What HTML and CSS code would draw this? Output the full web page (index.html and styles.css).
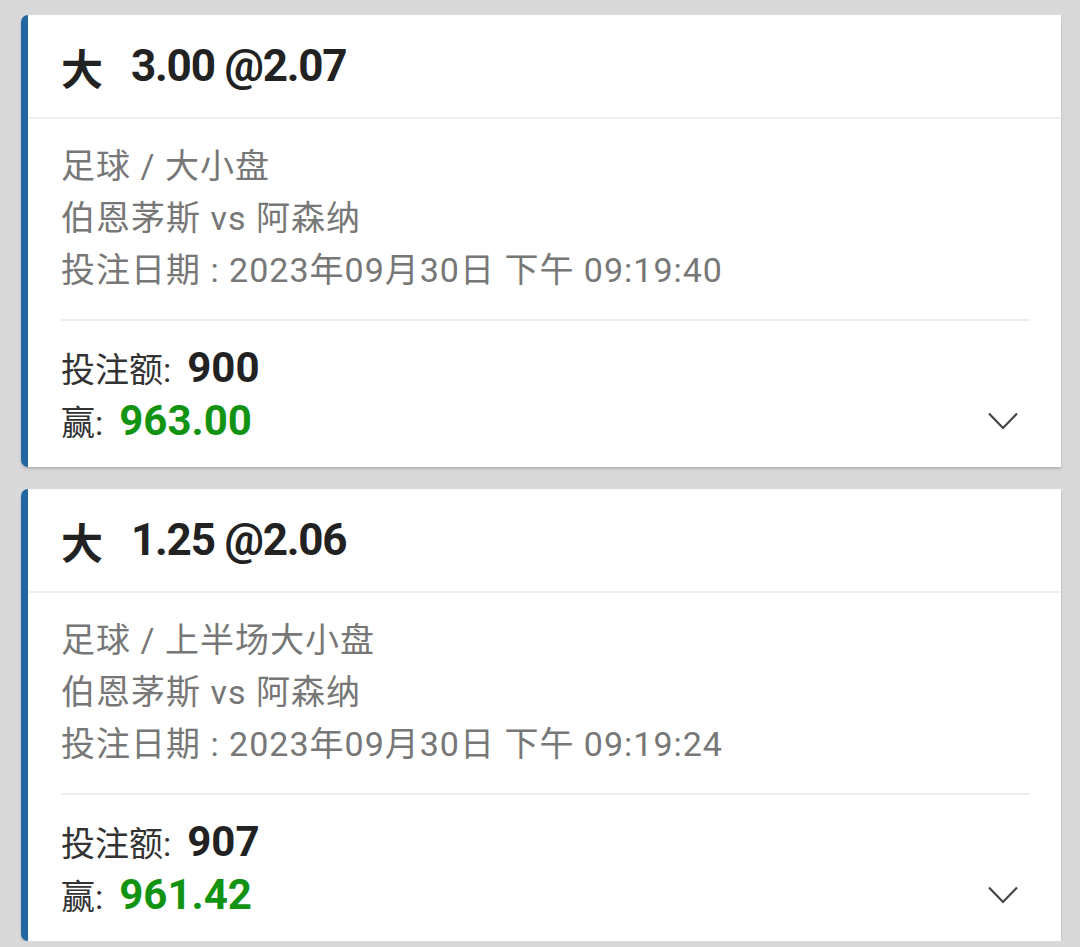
FILE: index.html
```html
<!DOCTYPE html>
<html lang="zh-CN">
<head>
<meta charset="utf-8">
<title>投注记录</title>
<link rel="stylesheet" href="styles.css">
</head>
<body>
<div class="list">
  <div class="card">
    <div class="card-head">
      <span class="side">大</span><span class="line">3.00 @2.07</span>
    </div>
    <div class="card-body">
      <div class="info">
        <div class="info-row">足球 / 大小盘</div>
        <div class="info-row">伯恩茅斯 vs 阿森纳</div>
        <div class="info-row">投注日期 : 2023年09月30日 下午 09:19:40</div>
      </div>
      <div class="amounts">
        <div class="amt-row"><span class="label">投注额:</span><span class="stake">900</span></div>
        <div class="amt-row"><span class="label">赢:</span><span class="win">963.00</span>
          <svg class="chev" width="30" height="18" viewBox="0 0 30 18"><path d="M1 1.5 L15 16 L29 1.5" fill="none" stroke="#444" stroke-width="2.2"/></svg>
        </div>
      </div>
    </div>
  </div>
  <div class="card">
    <div class="card-head">
      <span class="side">大</span><span class="line">1.25 @2.06</span>
    </div>
    <div class="card-body">
      <div class="info">
        <div class="info-row">足球 / 上半场大小盘</div>
        <div class="info-row">伯恩茅斯 vs 阿森纳</div>
        <div class="info-row">投注日期 : 2023年09月30日 下午 09:19:24</div>
      </div>
      <div class="amounts">
        <div class="amt-row"><span class="label">投注额:</span><span class="stake">907</span></div>
        <div class="amt-row"><span class="label">赢:</span><span class="win">961.42</span>
          <svg class="chev" width="30" height="18" viewBox="0 0 30 18"><path d="M1 1.5 L15 16 L29 1.5" fill="none" stroke="#444" stroke-width="2.2"/></svg>
        </div>
      </div>
    </div>
  </div>
</div>
</body>
</html>
```
FILE: styles.css
```css
html, body {
  margin: 0;
  padding: 0;
  background: #d9d9d9;
  font-family: Roboto, "Noto Sans CJK SC", sans-serif;
}
.list {
  display: flex;
  flex-direction: column;
  gap: 22px;
  padding: 15px 19px 0 21px;
}
.card {
  background: #fff;
  border-left: 7px solid #2367a1;
  border-radius: 7px 0 0 7px;
  box-shadow: 0 2px 3px rgba(0, 0, 0, 0.18);
  height: 452px;
  box-sizing: border-box;
}
.card-head {
  height: 102px;
  border-bottom: 2px solid #efefef;
  display: flex;
  align-items: center;
  padding-left: 33px;
  color: #222;
  font-weight: 700;
  font-size: 44px;
}
.side {
  font-size: 42px;
  margin-right: 28px;
}
.line {
  letter-spacing: -1.2px;
}
.card-body {
  padding: 21px 31px 0 33px;
}
.info {
  padding-bottom: 23px;
  border-bottom: 2px solid #eeeeee;
}
.info-row {
  height: 52px;
  line-height: 52px;
  font-size: 34px;
  letter-spacing: 1px;
  color: #777;
  white-space: nowrap;
}
.amounts {
  padding-top: 20px;
}
.amt-row {
  height: 53px;
  display: flex;
  align-items: center;
  color: #333;
}
.label {
  font-size: 34px;
  margin-right: 16px;
}
.stake {
  font-size: 42px;
  font-weight: 700;
  color: #222;
}
.win {
  font-size: 42px;
  font-weight: 700;
  color: #129412;
}
.chev {
  margin-left: auto;
  margin-right: 12px;
}
```
